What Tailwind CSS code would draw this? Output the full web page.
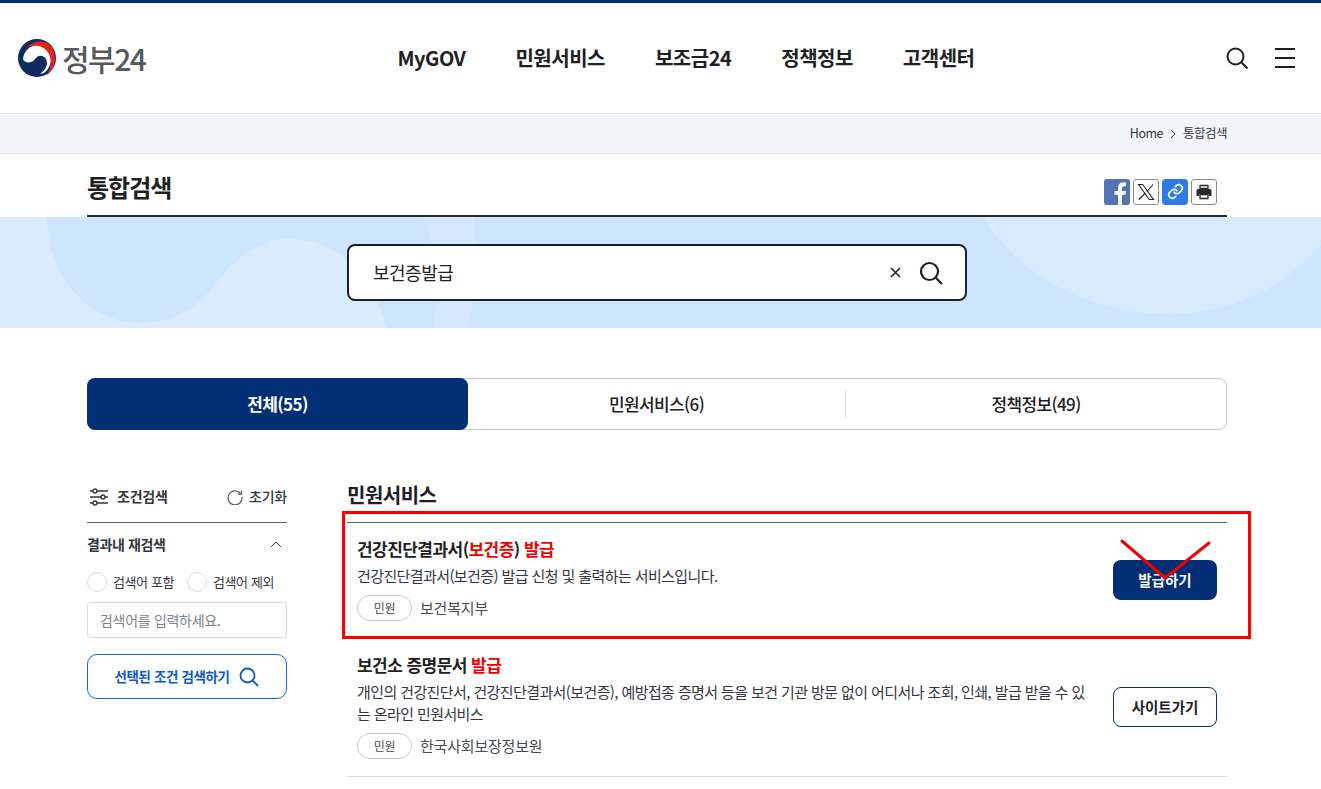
<!DOCTYPE html>
<html lang="ko">
<head>
<meta charset="UTF-8">
<title>정부24 통합검색</title>
<script src="https://cdn.jsdelivr.net/npm/@tailwindcss/browser@4"></script>
</head>
<body class="bg-white h-[789px] overflow-hidden font-['Noto_Sans_CJK_KR','Noto_Sans',sans-serif] text-[#1e2124]">
<header class="h-[114px] border-t-[3px] border-b border-t-[#002f75] border-b-[#e4e6ea] flex items-center justify-between pl-[18px] pr-[26px]">
  <a class="flex items-center gap-[6px] w-[130px] text-[#55585c] text-[30px] tracking-[-1.5px] font-medium">
    <svg class="w-[38px] h-[38px] shrink-0" viewBox="0 0 38 38">
      <circle cx="19" cy="19" r="19" fill="#0d2b5e"/>
      <path d="M5 20C6 11 13 6 20 6c8 0 13 6 13 14 0 6-3 11-7 14l-4 1c4-3 7-7 7-11 0-5-4-8-8-7-4 1-4 5-8 6-3 1-7 0-8-3z" fill="#fff"/>
      <path d="M8 10C13 1 29-1 35 10c4 8 2 20-6 26 4-6 5-14 2-21C26 6 14 4 8 10z" fill="#e2231a"/>
    </svg>
    <span>정부24</span>
  </a>
  <nav class="flex gap-[50px] text-[20px] font-bold tracking-[-0.5px] ml-[-2px]">
    <a>MyGOV</a><a>민원서비스</a><a>보조금24</a><a>정책정보</a><a>고객센터</a>
  </nav>
  <div class="flex items-center gap-[27px]">
    <svg class="w-[22px] h-[22px]" viewBox="0 0 22 22" fill="none" stroke="#1e2124" stroke-width="2"><circle cx="9.500" cy="9.500" r="8"/><path d="M15.500 15.500l6 6"/></svg>
    <div class="w-[20px] flex flex-col gap-[7px]"><i class="block h-[2px] bg-[#1e2124]"></i><i class="block h-[2px] bg-[#1e2124]"></i><i class="block h-[2px] bg-[#1e2124]"></i></div>
  </div>
</header>

<div class="h-[40px] bg-[#f4f5fa] border-b border-[#e4e6ea]">
  <div class="w-[1140px] ml-[87px] h-full flex items-center justify-end gap-[7px] text-[12.500px] tracking-[-0.5px] text-[#33363d]">
    <span>Home</span>
    <svg class="w-[6px] h-[10px]" viewBox="0 0 6 10" fill="none" stroke="#464c53"><path d="M1 1l4 4-4 4"/></svg>
    <span>통합검색</span>
  </div>
</div>

<div class="w-[1140px] ml-[87px] h-[63px] border-b-2 border-[#2a2a2a] flex items-center justify-between pt-[10px]">
  <h1 class="text-[24px] font-bold tracking-[-1px] mt-[-5px]">통합검색</h1>
  <div class="flex gap-[3px] items-center mt-[4px] mr-[10px]">
    <div class="w-[26px] h-[26px] rounded-[3px] bg-[#5373b5] flex items-end justify-end overflow-hidden">
      <svg class="w-[20px] h-[24px]" viewBox="0 0 20 24" fill="#fff"><path d="M8 24V14H4.500v-4H8V7c0-3.500 2-5.500 5.200-5.500 1.500 0 2.800.1 2.800.1v3.600h-1.900c-1.700 0-2.100 1-2.100 2.200V10h4l-.6 4H12v10z"/></svg>
    </div>
    <div class="w-[26px] h-[26px] rounded-[3px] bg-white border border-[#8a8f95] flex items-center justify-center">
      <svg class="w-[20px] h-[20px]" viewBox="0 0 24 24" fill="none" stroke="#1e2124" stroke-width="1.300"><path d="M3 3h5l13 18h-5z"/><path d="M20.500 3l-7.500 8.500M11 13.500L3.500 21"/></svg>
    </div>
    <div class="w-[26px] h-[26px] rounded-[4px] bg-[#2f7be6] flex items-center justify-center">
      <svg class="w-[17px] h-[17px]" viewBox="0 0 24 24" fill="none" stroke="#fff" stroke-width="2.400" stroke-linecap="round"><path d="M10 13a5 5 0 0 0 7.500.5l3-3a5 5 0 0 0-7-7l-1.700 1.700"/><path d="M14 11a5 5 0 0 0-7.500-.5l-3 3a5 5 0 0 0 7 7l1.700-1.700"/></svg>
    </div>
    <div class="w-[26px] h-[26px] rounded-[3px] bg-white border border-[#8a8f95] flex items-center justify-center">
      <svg class="w-[16px] h-[16px]" viewBox="0 0 16 16" fill="#2a2a2a"><path d="M4 1.500h8v3H4z" fill="none" stroke="#2a2a2a" stroke-width="1.300"/><path d="M2 5h12a1.500 1.500 0 0 1 1.500 1.500V12H13v-2H3v2H.5V6.500A1.500 1.500 0 0 1 2 5z"/><path d="M4 10.500h8v4H4z" fill="none" stroke="#2a2a2a" stroke-width="1.300"/></svg>
    </div>
  </div>
</div>

<section class="relative h-[111px] bg-[#cde5ff] overflow-hidden flex items-center pl-[347px]">
  <svg class="absolute inset-0 w-full h-full" viewBox="0 0 1321 111">
    <path d="M0 0H47C47 60 90 106 140 106C175 106 200 90 217 65C240 35 265 22 290 22C340 22 375 60 386 111H0Z" fill="#dbebff"/>
    <path d="M423 0H473C478 40 475 80 468 111H433C440 70 437 30 423 0Z" fill="#d3e8ff"/>
    <path d="M983 0C1020 60 1090 97 1167 97C1230 97 1285 70 1321 28V0Z" fill="#d8eaff"/>
  </svg>
  <div class="relative w-[620px] h-[57px] bg-white border-2 border-[#1e2124] rounded-[8px] flex items-center pl-[24px] pr-[22px] text-[18px] tracking-[-0.5px]">
    <span class="flex-1">보건증발급</span>
    <svg class="w-[11px] h-[11px] mr-[18px]" viewBox="0 0 11 11" stroke="#1e2124" stroke-width="1.600"><path d="M1 1l9 9M10 1l-9 9"/></svg>
    <svg class="w-[24px] h-[24px]" viewBox="0 0 24 24" fill="none" stroke="#1e2124" stroke-width="2.200"><circle cx="10.500" cy="10.500" r="8.500"/><path d="M16.500 16.500l6.500 6.500"/></svg>
  </div>
</section>

<div class="w-[1140px] ml-[87px]">
  <div class="mt-[50px] h-[52px] flex rounded-[8px] border border-[#c6cad0] text-[17px] tracking-[-0.6px] font-medium">
    <div class="w-[381px] -m-px mr-0 rounded-[8px] bg-[#002f75] text-white font-bold flex items-center justify-center h-[52px]">전체(55)</div>
    <div class="flex-1 flex items-center justify-center">민원서비스(6)</div>
    <div class="w-px h-[28px] bg-[#d8dbdf] self-center"></div>
    <div class="w-[380px] flex items-center justify-center">정책정보(49)</div>
  </div>

  <div class="mt-[53px] flex gap-[60px]">
    <aside class="w-[200px] shrink-0 text-[#33363d]">
      <div class="h-[40px] pb-[12px] border-b border-[#58616a] flex items-center justify-between text-[14px] font-medium tracking-[-0.2px]">
        <div class="flex items-center gap-[8px] pl-[2px]">
          <svg class="w-[20px] h-[20px]" viewBox="0 0 20 20" fill="#fff" stroke="#33363d" stroke-width="1.300"><path d="M1 4h18M1 10h18M1 16h18"/><circle cx="6" cy="4" r="2"/><circle cx="14" cy="10" r="2"/><circle cx="6" cy="16" r="2"/></svg>
          <span class="font-bold">조건검색</span>
        </div>
        <div class="flex items-center gap-[6px]">
          <svg class="w-[16px] h-[16px]" viewBox="0 0 16 16" fill="none" stroke="#5c6268" stroke-width="1.300"><path d="M13.500 4.500A7 7 0 1 0 15 8"/><path d="M14.500 1.500v3.500H11"/></svg>
          <span>초기화</span>
        </div>
      </div>
      <div class="mt-[11px] h-[20px] flex items-center justify-between text-[14px] font-bold tracking-[-0.4px]">
        <span>결과내 재검색</span>
        <svg class="w-[12px] h-[7px] mr-[5px]" viewBox="0 0 12 7" fill="none" stroke="#464c53"><path d="M1 6l5-5 5 5"/></svg>
      </div>
      <div class="mt-[18px] flex items-center text-[13px] tracking-[-0.4px] gap-[6px]">
        <i class="block w-[20px] h-[20px] rounded-full border border-[#d8dbdf] bg-white"></i><span class="w-[68px] whitespace-nowrap">검색어 포함</span>
        <i class="block w-[20px] h-[20px] rounded-full border border-[#d8dbdf] bg-white"></i><span class="whitespace-nowrap">검색어 제외</span>
      </div>
      <div class="mt-[10px] h-[36px] rounded-[4px] border border-[#d8dbdf] flex items-center px-[12px] text-[14px] text-[#7c848c] tracking-[-0.3px]">검색어를 입력하세요.</div>
      <button class="mt-[16px] w-full h-[45px] rounded-[10px] border border-[#0a6ae0] text-[#0a5bc8] text-[13.500px] font-bold tracking-[-0.4px] flex items-center justify-center gap-[10px]">
        선택된 조건 검색하기
        <svg class="w-[20px] h-[20px]" viewBox="0 0 20 20" fill="none" stroke="#0a5bc8" stroke-width="1.800"><circle cx="8.500" cy="8.500" r="7"/><path d="M13.500 13.500l5.500 5.500"/></svg>
      </button>
    </aside>

    <main class="flex-1 min-w-0">
      <h2 class="text-[20px] font-bold tracking-[-0.5px] h-[40px] leading-[24px] border-b border-[#58616a]">민원서비스</h2>
      <article class="h-[126px] flex items-start justify-between px-[10px] pt-[14px]">
        <div>
          <h3 class="text-[17px] font-bold tracking-[-0.55px] leading-[24px]">건강진단결과서(<span class="text-[#f00000]">보건증</span>) <span class="text-[#f00000]">발급</span></h3>
          <p class="mt-[5px] text-[15px] tracking-[-0.6px] leading-[20px] text-[#33363d]">건강진단결과서(보건증) 발급 신청 및 출력하는 서비스입니다.</p>
          <div class="mt-[9px] flex items-center gap-[8px] text-[15px] tracking-[-0.2px] text-[#464c53]"><span class="w-[55px] h-[26px] rounded-full border border-[#c6cad0] flex items-center justify-center text-[12px]">민원</span>보건복지부</div>
        </div>
        <button class="mt-[23px] w-[104px] h-[40px] rounded-[8px] bg-[#002f75] text-white text-[14.500px] font-bold">발급하기</button>
      </article>
      <article class="h-[128px] border-b border-[#d8dbdf] flex items-start justify-between px-[10px] pt-[4px]">
        <div class="w-[730px]">
          <h3 class="text-[17px] font-bold tracking-[-0.55px] leading-[24px]">보건소 증명문서 <span class="text-[#f00000]">발급</span></h3>
          <p class="mt-[4px] text-[15px] tracking-[-0.6px] leading-[22px] text-[#33363d] break-all">개인의 건강진단서, 건강진단결과서(보건증), 예방접종 증명서 등을 보건 기관 방문 없이 어디서나 조회, 인쇄, 발급 받을 수 있는 온라인 민원서비스</p>
          <div class="mt-[8px] flex items-center gap-[8px] text-[15px] tracking-[-0.2px] text-[#464c53]"><span class="w-[55px] h-[26px] rounded-full border border-[#c6cad0] flex items-center justify-center text-[12px]">민원</span>한국사회보장정보원</div>
        </div>
        <button class="mt-[34px] w-[104px] h-[40px] rounded-[8px] border border-[#002f75] text-[#1e2124] text-[14.500px] font-bold">사이트가기</button>
      </article>
    </main>
  </div>
</div>

<!-- red annotation drawn over the page -->
<div class="absolute left-[342px] top-[511px] w-[909px] h-[128px] border-[3px] border-[#ff0000] pointer-events-none"></div>
<svg class="absolute left-[1115px] top-[535px] w-[100px] h-[50px] pointer-events-none" viewBox="0 0 100 50" fill="none" stroke="#f00000" stroke-width="3" stroke-linecap="round"><path d="M7 6l43 37 44-35"/></svg>
</body>
</html>
